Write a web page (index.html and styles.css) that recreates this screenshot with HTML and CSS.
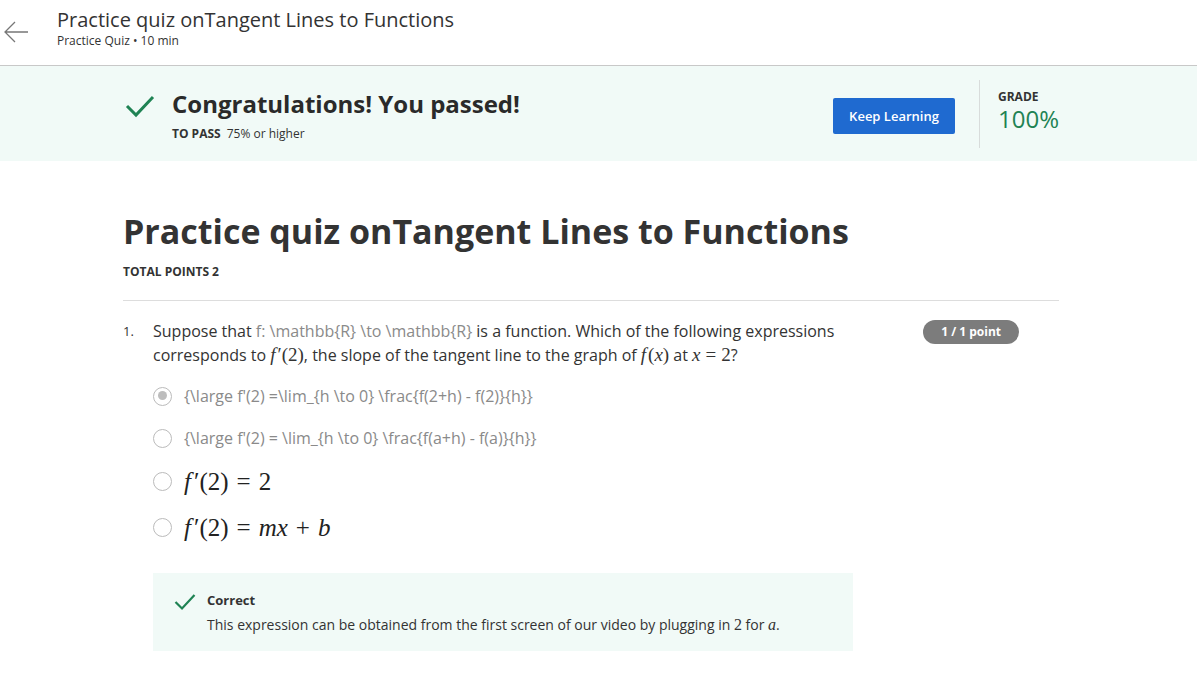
FILE: index.html
```html
<!DOCTYPE html>
<html>
<head>
<meta charset="utf-8">
<link rel="stylesheet" href="styles.css">
</head>
<body>
<header class="topbar">
  <div class="back">
    <svg width="26" height="24" viewBox="0 0 26 24"><path d="M25 12H2M12 2L2 12l10 10" fill="none" stroke="#777" stroke-width="1.3"/></svg>
  </div>
  <div class="topbar-text">
    <div class="topbar-title">Practice quiz onTangent Lines to Functions</div>
    <div class="topbar-sub">Practice Quiz • 10 min</div>
  </div>
</header>

<section class="banner">
  <div class="banner-main">
    <svg class="banner-check" width="30" height="24" viewBox="0 0 30 24"><path d="M2 12l9 9L28 3" fill="none" stroke="#1f8354" stroke-width="3"/></svg>
    <div>
      <div class="banner-title">Congratulations! You passed!</div>
      <div class="banner-pass"><b>TO PASS</b>75% or higher</div>
    </div>
  </div>
  <button class="keep">Keep Learning</button>
  <div class="grade">
    <div class="grade-label">GRADE</div>
    <div class="grade-value">100%</div>
  </div>
</section>

<main class="content">
  <h1 class="quiz-title">Practice quiz onTangent Lines to Functions</h1>
  <div class="total">TOTAL POINTS 2</div>
  <div class="question">
    <div class="qnum">1.</div>
    <div class="qbody">
      <div class="qtop">
        <p class="qtext">Suppose that <span class="raw">f: \mathbb{R} \to \mathbb{R}</span> is a function. Which of the following expressions corresponds to <span class="m"><i class="f">f</i>′(2)</span>, the slope of the tangent line to the graph of <span class="m"><i class="f">f</i>(<i>x</i>)</span> at <span class="m"><i>x</i><span class="op">=</span>2</span>?</p>
        <span class="badge">1 / 1 point</span>
      </div>
      <div class="options">
        <div class="opt"><span class="radio checked"></span><span class="raw">{\large f'(2) =\lim_{h \to 0} \frac{f(2+h) - f(2)}{h}}</span></div>
        <div class="opt"><span class="radio"></span><span class="raw">{\large f'(2) = \lim_{h \to 0} \frac{f(a+h) - f(a)}{h}}</span></div>
        <div class="opt big"><span class="radio"></span><span class="m lg"><i class="f">f</i>′(2)<span class="op">=</span>2</span></div>
        <div class="opt big"><span class="radio"></span><span class="m lg"><i class="f">f</i>′(2)<span class="op">=</span><i>mx</i><span class="op">+</span><i>b</i></span></div>
      </div>
      <div class="feedback">
        <svg class="fb-check" width="22" height="18" viewBox="0 0 22 18"><path d="M1.5 9l6.5 6.5L20.5 2" fill="none" stroke="#1f8354" stroke-width="2.2"/></svg>
        <div>
          <div class="fb-title">Correct</div>
          <div class="fb-text">This expression can be obtained from the first screen of our video by plugging in <span class="m">2</span> for <span class="m"><i>a</i></span>.</div>
        </div>
      </div>
    </div>
  </div>
</main>
</body>
</html>
```
FILE: styles.css
```css
* { box-sizing: border-box; }
body {
  margin: 0;
  font-family: "Open Sans", "Liberation Sans", sans-serif;
  color: #333;
  background: #fff;
}
.topbar {
  height: 66px;
  display: flex;
  align-items: flex-start;
  border-bottom: 1px solid #c8c8c8;
}
.back {
  width: 57px;
  padding: 20px 0 0 3px;
}
.topbar-text { padding-top: 7px; }
.topbar-title {
  font-size: 20px;
  line-height: 26px;
  color: #333;
}
.topbar-sub {
  font-size: 12px;
  line-height: 16px;
  color: #333;
}
.banner {
  height: 95px;
  background: #f1faf7;
  display: flex;
  align-items: flex-start;
  padding-left: 125px;
}
.banner-main {
  display: flex;
  align-items: flex-start;
  width: 708px;
  padding-top: 22px;
}
.banner-check { margin-top: 6px; margin-right: 17px; }
.banner-title {
  font-size: 24px;
  font-weight: 700;
  line-height: 32px;
  color: #2a2a2a;
}
.banner-pass {
  font-size: 12px;
  line-height: 16px;
  margin-top: 6px;
  color: #333;
}
.banner-pass b { margin-right: 6px; }
.keep {
  margin-top: 32px;
  width: 122px;
  height: 36px;
  border: none;
  border-radius: 2px;
  background: #1f6ad0;
  color: #fff;
  font-family: "Open Sans", sans-serif;
  font-size: 13px;
  font-weight: 600;
  padding: 0;
}
.grade {
  margin-left: 24px;
  margin-top: 14px;
  height: 68px;
  border-left: 1px solid #d8dcdb;
  padding-left: 18px;
  padding-top: 9px;
}
.grade-label {
  font-size: 12px;
  font-weight: 700;
  line-height: 16px;
  color: #333;
}
.grade-value {
  font-size: 24px;
  line-height: 28px;
  color: #1f8354;
}
.content {
  width: 936px;
  margin-left: 123px;
}
.quiz-title {
  margin: 0;
  padding-top: 48px;
  font-size: 34px;
  font-weight: 700;
  line-height: 44px;
  color: #333;
}
.total {
  margin-top: 11px;
  font-size: 12px;
  font-weight: 700;
  line-height: 16px;
  padding-bottom: 20px;
  border-bottom: 1px solid #ddd;
}
.question {
  display: flex;
  padding-top: 18px;
}
.qnum {
  width: 30px;
  font-size: 13px;
  line-height: 24px;
}
.qbody { flex: 1; }
.qtop {
  display: flex;
  justify-content: space-between;
  align-items: flex-start;
}
.qtext {
  margin: 0;
  width: 700px;
  font-size: 16px;
  line-height: 24px;
}
.raw { color: #8a8a8a; }
.m {
  font-family: "Liberation Serif", "DejaVu Serif", serif;
  font-size: 19px;
  line-height: 1;
}
.m i { font-style: italic; }
.m .f { margin-right: 2px; }
.m .op { margin: 0 5px; }
.badge {
  margin-top: 1px;
  margin-right: 40px;
  background: #7c7c7c;
  color: #fff;
  font-size: 12px;
  font-weight: 700;
  line-height: 16px;
  padding: 4px 18px;
  border-radius: 12px;
}
.options {
  padding-top: 8px;
}
.opt {
  display: flex;
  align-items: center;
  height: 42px;
  font-size: 16px;
}
.opt.big { height: 44px; }
.opt.big:last-child { height: 48px; }
.radio {
  width: 19px;
  height: 19px;
  border: 1.5px solid #bbb;
  border-radius: 50%;
  margin-right: 12px;
  position: relative;
  flex: none;
}
.radio.checked::after {
  content: "";
  position: absolute;
  left: 3.5px;
  top: 3.5px;
  width: 9px;
  height: 9px;
  border-radius: 50%;
  background: #bdbdbd;
}
.m.lg { font-size: 25px; color: #222; }
.m.lg .f { margin-right: 3px; }
.m.lg .op { margin: 0 8px; }
.feedback {
  margin-top: 22px;
  width: 700px;
  height: 78px;
  background: #f1faf7;
  display: flex;
  align-items: flex-start;
  padding: 20px 0 0 21px;
}
.fb-check { margin-top: 0; margin-right: 11px; }
.fb-title {
  font-size: 13px;
  font-weight: 700;
  line-height: 14px;
}
.fb-text {
  margin-top: 9px;
  font-size: 14px;
  line-height: 18px;
}
.fb-text .m { font-size: 16px; }
```
